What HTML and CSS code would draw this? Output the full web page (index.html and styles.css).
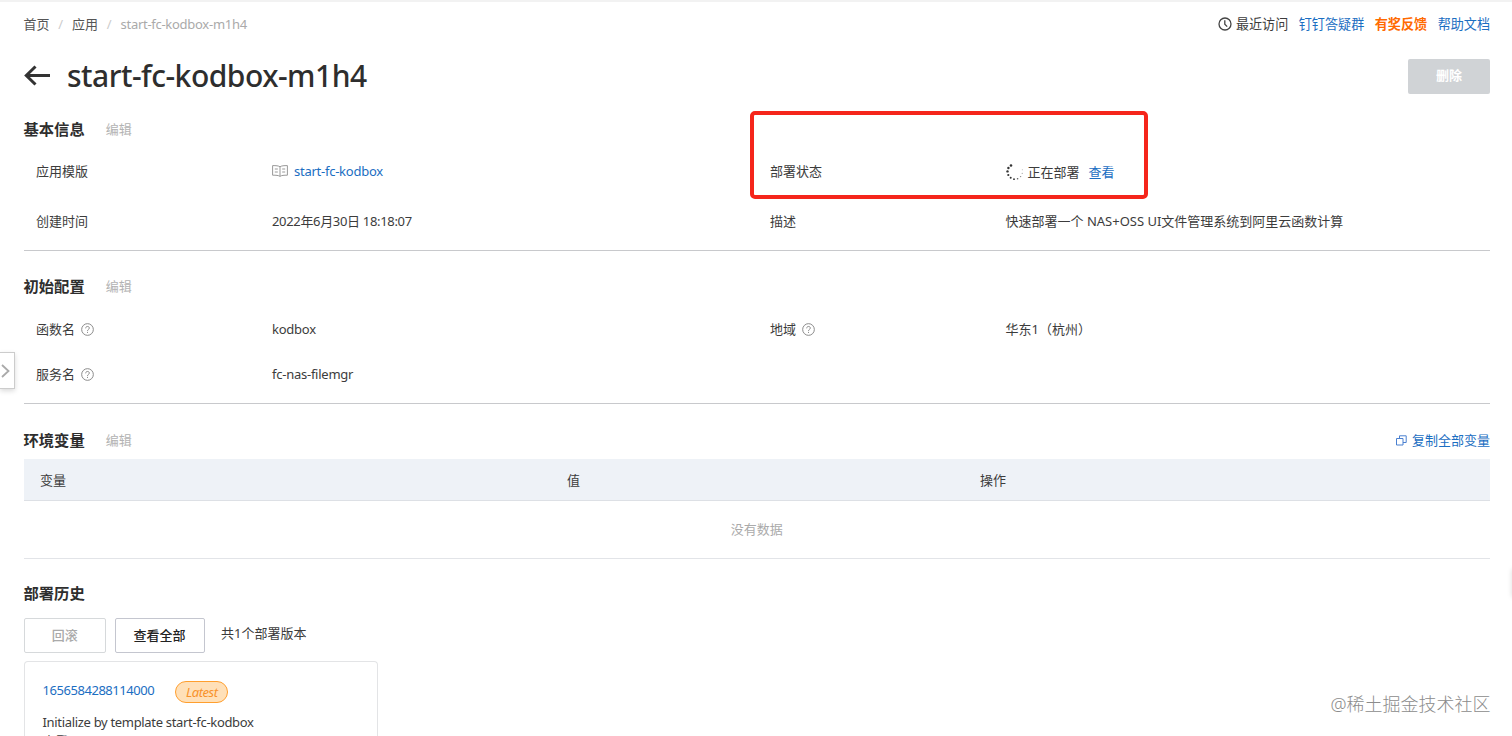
FILE: index.html
```html
<!DOCTYPE html>
<html lang="zh-CN">
<head>
  <meta charset="utf-8">
  <title>start-fc-kodbox-m1h4</title>
  <link rel="stylesheet" href="styles.css">
</head>
<body>
  <div class="page">
    <div class="top-nav">
      <div class="breadcrumb">
        <a>首页</a>
        <span class="sep">/</span>
        <a>应用</a>
        <span class="sep">/</span>
        <span class="current">start-fc-kodbox-m1h4</span>
      </div>
      <div class="top-links">
        <span class="recent">
          <svg width="14" height="14" viewBox="0 0 14 14" fill="none" stroke="#444" stroke-width="1.3"><circle cx="7" cy="7" r="6"/><path d="M6.800 3.200V7.200L9.200 9.600"/></svg>
          最近访问
        </span>
        <a class="link">钉钉答疑群</a>
        <a class="feedback">有奖反馈</a>
        <a class="link">帮助文档</a>
      </div>
    </div>

    <div class="title-bar">
      <svg class="back" width="27" height="22" viewBox="0 0 27 22" fill="none" stroke="#333" stroke-width="3"><path d="M26 10.500H2.500M11.500 1.500L2.300 10.500L11.500 19.500"/></svg>
      <h1>start-fc-kodbox-m1h4</h1>
      <button class="btn-delete">删除</button>
    </div>

    <div class="section basic">
      <div class="section-head"><h2>基本信息</h2><span class="edit">编辑</span></div>
      <div class="info">
        <div>应用模版</div>
        <div class="with-icon">
          <svg width="16" height="12" viewBox="0 0 16 12" fill="none" stroke="#999" stroke-width="1"><path d="M8 1.800C6.500.7 4 .6.6.6v9.600c3.400 0 5.900.1 7.400 1.200 1.500-1.100 4-1.200 7.400-1.200V.6C12 .6 9.500.7 8 1.800zM8 1.800v9.400M2.800 4h3M2.800 7h3M10.200 4h3M10.200 7h3"/></svg>
          <a class="link en">start-fc-kodbox</a>
        </div>
        <div>部署状态</div>
        <div class="with-icon status">
          <svg width="18" height="18" viewBox="0 0 18 18" fill="#333">
            <circle cx="5" cy="2.500" r="1.300"/><circle cx="2.400" cy="5" r="1.200"/><circle cx="1.500" cy="8.400" r="1.200"/><circle cx="2.300" cy="12" r="1.100"/><circle cx="4.700" cy="14.800" r="1"/><circle cx="8" cy="16.200" r=".9"/><circle cx="11.600" cy="15.800" r=".8" opacity=".8"/><circle cx="14.600" cy="13.600" r=".7" opacity=".6"/><circle cx="16.200" cy="10.300" r=".6" opacity=".5"/><circle cx="16.300" cy="6.800" r=".5" opacity=".4"/>
          </svg>
          <span>正在部署</span>
          <a class="link view">查看</a>
          <div class="highlight"></div>
        </div>
        <div>创建时间</div>
        <div class="date">2022年6月30日 18:18:07</div>
        <div>描述</div>
        <div class="desc">快速部署一个 NAS+OSS UI文件管理系统到阿里云函数计算</div>
      </div>
    </div>

    <div class="section config">
      <div class="section-head"><h2>初始配置</h2><span class="edit">编辑</span></div>
      <div class="info">
        <div class="with-help">函数名 <svg width="13" height="13" viewBox="0 0 12 12" fill="none" stroke="#888" stroke-width=".9"><circle cx="6" cy="6" r="5.400"/><path d="M4.300 4.900C4.300 2.600 7.700 2.700 7.700 4.700 7.700 5.900 6 5.900 6 7.300M6 8.200v1"/></svg></div>
        <div class="en">kodbox</div>
        <div class="with-help">地域 <svg width="13" height="13" viewBox="0 0 12 12" fill="none" stroke="#888" stroke-width=".9"><circle cx="6" cy="6" r="5.400"/><path d="M4.300 4.900C4.300 2.600 7.700 2.700 7.700 4.700 7.700 5.900 6 5.900 6 7.300M6 8.200v1"/></svg></div>
        <div>华东1（杭州）</div>
        <div class="with-help">服务名 <svg width="13" height="13" viewBox="0 0 12 12" fill="none" stroke="#888" stroke-width=".9"><circle cx="6" cy="6" r="5.400"/><path d="M4.300 4.900C4.300 2.600 7.700 2.700 7.700 4.700 7.700 5.900 6 5.900 6 7.300M6 8.200v1"/></svg></div>
        <div class="en">fc-nas-filemgr</div>
      </div>
    </div>

    <div class="section env">
      <div class="section-head">
        <h2>环境变量</h2><span class="edit">编辑</span>
        <a class="link copy-all">
          <svg width="11" height="11" viewBox="0 0 11 11" fill="none" stroke="#4a80d0" stroke-width="1"><path d="M.5 3.500h6.500v6.500H.5zM3.500 3.500V.8h6.700v6.700H7"/></svg>
          复制全部变量
        </a>
      </div>
      <div class="table-head">
        <span>变量</span><span>值</span><span>操作</span>
      </div>
      <div class="table-empty">没有数据</div>
    </div>

    <div class="history">
      <h2>部署历史</h2>
      <div class="actions">
        <button class="btn" disabled>回滚</button>
        <button class="btn btn-all">查看全部</button>
        <span class="total">共1个部署版本</span>
      </div>
      <div class="card">
        <div class="version">
          <a class="link">1656584288114000</a>
          <span class="tag">Latest</span>
        </div>
        <div class="message">Initialize by template start-fc-kodbox</div>
        <div class="source">查看</div>
      </div>
    </div>
  </div>

  <div class="drawer-handle">
    <svg width="10" height="14" viewBox="0 0 10 14" fill="none" stroke="#aaa" stroke-width="1.800"><path d="M2 1L8.500 7L2 13"/></svg>
  </div>
  <div class="side-tab"></div>
  <div class="watermark">@稀土掘金技术社区</div>
</body>
</html>
```

FILE: styles.css
```css
* {
  box-sizing: border-box;
}

body {
  margin: 0;
  height: 736px;
  overflow: hidden;
  position: relative;
  background: #fff;
  border-top: 2px solid #f2f2f2;
  color: #3c3c3c;
  font-family: "Noto Sans", "Noto Sans CJK SC", sans-serif;
  font-size: 13px;
  line-height: 20px;
}

h1, h2 {
  margin: 0;
  color: #2e2e2e;
}

h2 {
  font-size: 15.3px;
  font-weight: 700;
  line-height: 22px;
}

.page {
  height: 734px;
  overflow: hidden;
  padding: 0 22px 0 23.5px;
}

.link {
  color: #1b6ec2;
}

.en {
  letter-spacing: -0.25px;
}

.top-nav {
  display: flex;
  justify-content: space-between;
  align-items: center;
  height: 44px;
}

.breadcrumb {
  display: flex;
  color: #555;
}

.breadcrumb .sep {
  width: 22.5px;
  text-align: center;
  color: #ccc;
}

.breadcrumb .current {
  color: #aaa;
  letter-spacing: -0.28px;
}

.top-links {
  display: flex;
  gap: 10.5px;
  font-size: 13.1px;
}

.recent {
  display: flex;
  align-items: center;
  gap: 4px;
}

.feedback {
  color: #ff6a00;
  font-weight: 600;
}

.title-bar {
  display: flex;
  align-items: center;
  height: 58px;
  margin-top: 1px;
}

.title-bar h1 {
  margin-left: 16.5px;
  font-size: 30px;
  font-weight: 500;
  line-height: 40px;
  letter-spacing: -0.5px;
}

.btn-delete {
  width: 82px;
  height: 35px;
  margin-left: auto;
  padding: 0 0 3px;
  border: 0;
  border-radius: 2px;
  background: #d0d3d6;
  color: #fff;
  font: 700 13px "Noto Sans CJK SC", sans-serif;
}

.section-head {
  display: flex;
  align-items: center;
  height: 22px;
}

.edit {
  margin-left: 21px;
  color: #b3b3b3;
}

.basic {
  height: 146px;
  padding-top: 13px;
  border-bottom: 1px solid #c8c9cc;
}

.config {
  height: 153px;
  padding-top: 24px;
  border-bottom: 1px solid #c8c9cc;
}

.info {
  display: grid;
  grid-template-columns: 236px 498px 235.5px 1fr;
  padding-left: 12.5px;
}

.basic .info {
  padding-top: 21px;
  row-gap: 30px;
}

.config .info {
  padding-top: 22px;
  row-gap: 25px;
}

.with-icon,
.with-help {
  display: flex;
  align-items: center;
  gap: 6px;
}

.status {
  position: relative;
  gap: 4px;
  top: 1px;
}

.view {
  margin-left: 5px;
}

.date {
  letter-spacing: -0.33px;
}

/* frame round the deployment status */
.highlight {
  position: absolute;
  left: -256px;
  top: -51px;
  width: 398px;
  height: 88px;
  border: 4px solid #f5251b;
  border-radius: 5px;
}

.env {
  padding-top: 25px;
}

.copy-all {
  display: flex;
  align-items: center;
  gap: 5px;
  margin-left: auto;
}

.table-head {
  display: grid;
  grid-template-columns: 527px 413px 1fr;
  align-items: center;
  height: 42px;
  margin-top: 8px;
  background: #eef2f7;
  border-bottom: 1px solid #dde0e5;
}

.table-head span {
  padding-left: 16.5px;
}

.table-empty {
  height: 58px;
  border-bottom: 1px solid #e2e4e8;
  color: #aaa;
  line-height: 56px;
  text-align: center;
}

.history {
  padding-top: 23px;
}

.actions {
  display: flex;
  margin-top: 14px;
}

.btn {
  width: 82.5px;
  height: 35px;
  margin-right: 8.5px;
  padding: 0 0 3px;
  border: 1px solid #d6d9db;
  border-radius: 2px;
  background: #fff;
  color: #aaa;
  font: 500 13px "Noto Sans CJK SC", sans-serif;
}

.btn-all {
  width: 90px;
  margin-right: 16.5px;
  border-color: #c4c6cf;
  color: #222;
}

.total {
  line-height: 31px;
}

.card {
  width: 354px;
  height: 75px;
  margin-top: 8px;
  padding: 18px 18px 0;
  border: 1px solid #e3e4e6;
  border-bottom: 0;
  border-radius: 4px 4px 0 0;
}

.version {
  display: flex;
  align-items: flex-start;
  gap: 21px;
  letter-spacing: -0.45px;
}

.tag {
  width: 53px;
  height: 22px;
  margin-top: 1px;
  border: 1px solid #ff9f2e;
  border-radius: 11px;
  background: #ffe0b8;
  color: #f8922a;
  font-style: italic;
  line-height: 20px;
  text-align: center;
}

.message {
  margin-top: 9px;
  letter-spacing: -0.32px;
}

.source {
  margin-top: -1px;
}

.drawer-handle {
  position: absolute;
  left: 0;
  top: 350px;
  display: flex;
  align-items: center;
  width: 15px;
  height: 37px;
  border: 1px solid #ccc;
  border-left: 0;
  background: #fff;
  box-shadow: 0 2px 5px rgba(0, 0, 0, 0.15);
}

.side-tab {
  position: absolute;
  right: -4px;
  top: 567px;
  width: 4px;
  height: 28px;
  box-shadow: 0 0 5px rgba(0, 0, 0, 0.15);
}

.watermark {
  position: absolute;
  right: 21.5px;
  top: 690px;
  color: #8c8c8c;
  font-size: 18px;
  font-weight: 300;
  line-height: 24px;
}
```
